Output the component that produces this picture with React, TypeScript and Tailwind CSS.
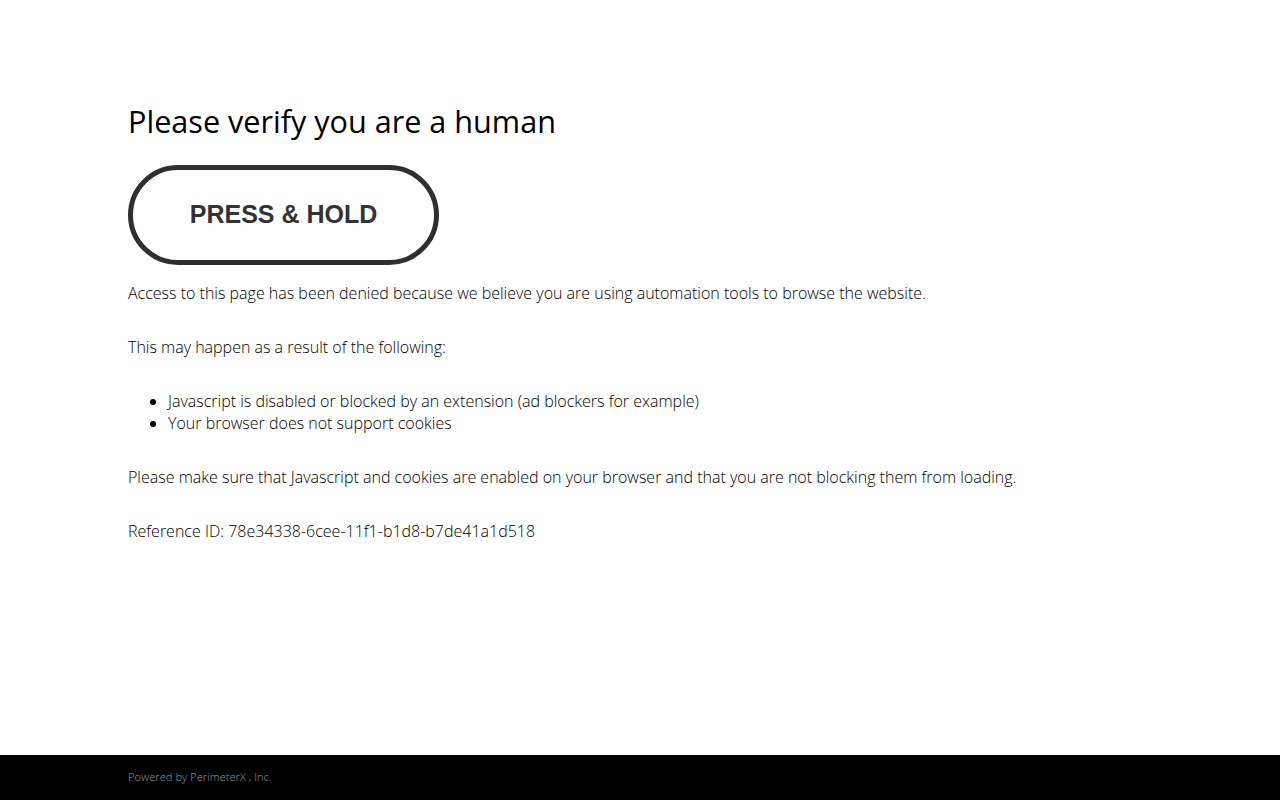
export default function App() {
  return (
    <div className="flex min-h-screen flex-col bg-white font-['Open_Sans',sans-serif] text-black">
      <main className="flex-1 px-32 pt-[98px]">
        <h1 className="text-[30.6px] leading-[46px] font-normal text-black">
          Please verify you are a human
        </h1>
        <div className="mt-[21px] flex h-[100px] w-[311px] items-center justify-center rounded-full border-[5px] border-[#2f2f2f] bg-white">
          <span className="font-['Liberation_Sans',Arial,sans-serif] text-[25px] font-bold text-[#333]">
            PRESS &amp; HOLD
          </span>
        </div>
        <div className="mt-[17px] text-base leading-[22px] font-light">
          <p>
            Access to this page has been denied because we believe you are using
            automation tools to browse the website.
          </p>
          <p className="mt-8">This may happen as a result of the following:</p>
          <ul className="mt-8 list-disc pl-10">
            <li>Javascript is disabled or blocked by an extension (ad blockers for example)</li>
            <li>Your browser does not support cookies</li>
          </ul>
          <p className="mt-8">
            Please make sure that Javascript and cookies are enabled on your browser
            and that you are not blocking them from loading.
          </p>
          <p className="mt-8">Reference ID: 78e34338-6cee-11f1-b1d8-b7de41a1d518</p>
        </div>
      </main>
      <footer className="flex h-[45px] items-center bg-black px-32">
        <span className="text-[11.2px] font-light text-[#999]">
          Powered by PerimeterX , Inc.
        </span>
      </footer>
    </div>
  );
}
